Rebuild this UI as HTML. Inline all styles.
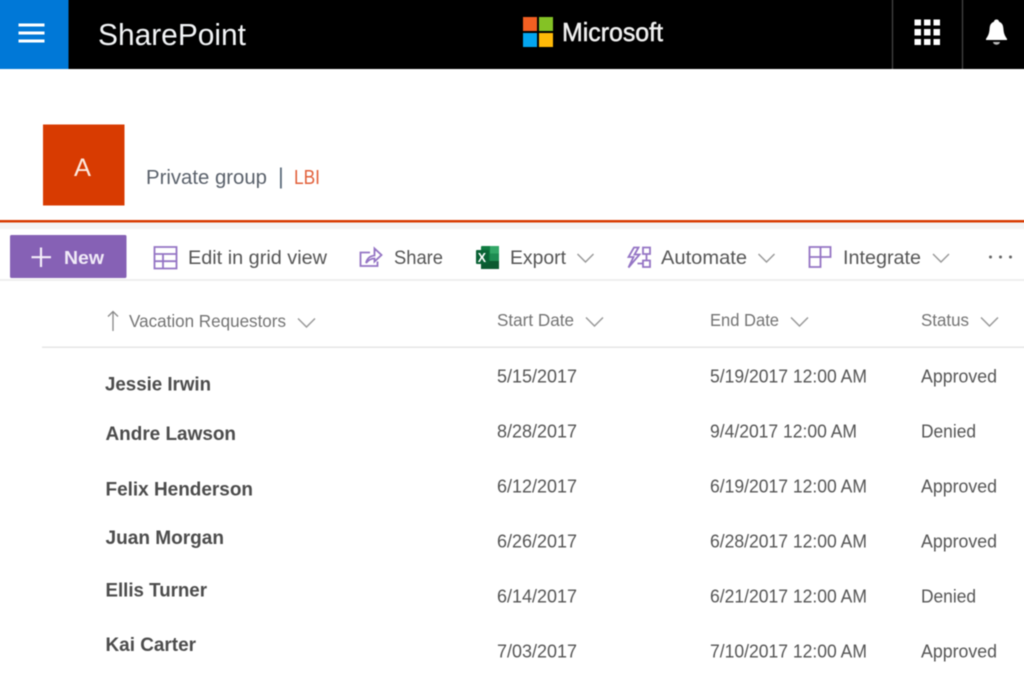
<!DOCTYPE html>
<html lang="en">
<head>
<meta charset="utf-8">
<title>SharePoint</title>
<style>
html,body{margin:0;padding:0;width:1024px;height:695px;overflow:hidden;background:#fff}
#w{position:relative;width:1024px;height:695px;overflow:hidden;contain:paint}
svg{display:block;position:absolute;left:-10px;top:-10px;filter:blur(.5px)}
text{font-family:"Liberation Sans",sans-serif}
.nm{font-size:19.5px;font-weight:700;fill:#4c4c4c}
.c{font-size:18px;fill:#555}
.h{font-size:17.5px;fill:#737373}
.t{font-size:19.5px;fill:#555}
.chev{fill:none;stroke:#969696;stroke-width:1.4}
.pu{fill:none;stroke:#9474c4;stroke-width:1.8}
</style>
</head>
<body>
<div id="w">
<svg width="1044" height="715" viewBox="-10 -10 1044 715" xmlns="http://www.w3.org/2000/svg">
<rect x="-10" y="-10" width="1044" height="715" fill="#fff"/>
<!-- top bar -->
<rect x="-10" y="-10" width="1044" height="79" fill="#000"/>
<rect x="-10" y="-10" width="78.500" height="79" fill="#0078d7"/>
<path d="M18.500 25H44.500M18.500 33H44.500M18.500 41H44.500" stroke="#fff" stroke-width="3"/>
<text x="98" y="45" font-size="31" fill="#f2f4f6" textLength="148" lengthAdjust="spacingAndGlyphs">SharePoint</text>
<rect x="523" y="17" width="14" height="14" fill="#f25f22"/>
<rect x="539" y="17" width="14" height="14" fill="#84c225"/>
<rect x="523" y="33" width="14" height="14" fill="#04a6f0"/>
<rect x="539" y="33" width="14" height="14" fill="#ffba08"/>
<text x="562" y="41" font-size="26" fill="#f0f0f0" stroke="#f0f0f0" stroke-width=".5" textLength="101" lengthAdjust="spacingAndGlyphs">Microsoft</text>
<path d="M892.500 -10V69M962.500 -10V69" stroke="#444" stroke-width="1.300"/>
<g fill="#fff">
<rect x="914.500" y="19.500" width="6.500" height="6"/><rect x="924" y="19.500" width="6.500" height="6"/><rect x="933.500" y="19.500" width="6.500" height="6"/>
<rect x="914.500" y="29" width="6.500" height="6.500"/><rect x="924" y="29" width="6.500" height="6.500"/><rect x="933.500" y="29" width="6.500" height="6.500"/>
<rect x="914.500" y="39" width="6.500" height="6"/><rect x="924" y="39" width="6.500" height="6"/><rect x="933.500" y="39" width="6.500" height="6"/>
<path d="M996.500 19.500c-1.500 0-2.400 1-2.600 2.200-3.200 1.200-4 3.600-4.300 6.800-.3 4.300-1 6.800-3.600 10.200v1.300h21v-1.300c-2.600-3.400-3.300-5.900-3.600-10.200-.3-3.200-1.100-5.600-4.300-6.800-.2-1.200-1.100-2.200-2.600-2.200z"/>
<path d="M993 42h7c-.3 1.700-1.700 2.700-3.500 2.700s-3.200-1-3.500-2.700z" fill="#bbb"/>
</g>
<!-- site header -->
<rect x="43" y="124.500" width="81.500" height="81" fill="#d83b01"/>
<text x="74" y="176" font-size="25" fill="#fde8de" textLength="17" lengthAdjust="spacingAndGlyphs">A</text>
<text x="146" y="184" font-size="20.500" fill="#5a616b" textLength="121" lengthAdjust="spacingAndGlyphs">Private group</text>
<rect x="280" y="167.500" width="1.800" height="21" fill="#5a6a7a"/>
<text x="294" y="184" font-size="20.500" fill="#e2603a" textLength="26" lengthAdjust="spacingAndGlyphs">LBI</text>
<rect x="-10" y="220" width="1044" height="2.500" fill="#d83b01"/>
<rect x="-10" y="222.500" width="1044" height="6.500" fill="#f4f4f4"/>
<!-- command bar -->
<rect x="-10" y="279" width="1044" height="2" fill="#efefef"/>
<rect x="10" y="235" width="116.500" height="43" rx="1.500" fill="#8661b5"/>
<path d="M41 247.500V267M31.500 257.200H51" stroke="#f4eefa" stroke-width="2.200"/>
<text x="64" y="264" font-size="18.500" font-weight="700" fill="#f0eaf7" textLength="40" lengthAdjust="spacingAndGlyphs">New</text>
<path class="pu" d="M154.500 247h22v21.500h-22zM154.500 254h22M154.500 261.200h22M163 254v14.500"/>
<text class="t" x="188" y="264" textLength="139" lengthAdjust="spacingAndGlyphs">Edit in grid view</text>
<path class="pu" stroke-width="1.400" d="M370 252.500h-9.500V266h17v-4.500M366 263c1-4.500 4-7 8.500-7.500V248.500l7 6.500-7 6.500V258.500c-3.500 0-6 1.500-8.500 4.500z"/>
<text class="t" x="394" y="264" textLength="49" lengthAdjust="spacingAndGlyphs">Share</text>
<!-- excel -->
<rect x="481" y="246" width="18" height="23" rx="1" fill="#107c41"/>
<rect x="490" y="246" width="9" height="7.500" fill="#33a767"/>
<rect x="490" y="253.500" width="9" height="7.500" fill="#1e8c52"/>
<rect x="481" y="261" width="18" height="8" fill="#0b5a30"/>
<rect x="476" y="250" width="13" height="14" rx="1" fill="#0a6235"/>
<text x="477.800" y="262" font-size="12.500" font-weight="700" fill="#fff">X</text>
<text class="t" x="510" y="264" textLength="56" lengthAdjust="spacingAndGlyphs">Export</text>
<path class="chev" d="M577.500 254l8 8 8-8"/>
<path class="pu" stroke-width="1.500" d="M634 247.500l-5.500 9.500h5l-5 10.500 11-13h-5l4-7zM643 247.500h7v6.500h-7zM643 260.500h7v6.500h-7zM646.500 254v6.500M642.500 263.500h-5"/>
<text class="t" x="661" y="264" textLength="86" lengthAdjust="spacingAndGlyphs">Automate</text>
<path class="chev" d="M758.500 254l8 8 8-8"/>
<path class="pu" d="M809.500 247h21v10h-21zM809.500 247v20h11V247"/>
<text class="t" x="843" y="264" textLength="78" lengthAdjust="spacingAndGlyphs">Integrate</text>
<path class="chev" d="M933 254l8 8 8-8"/>
<g fill="#666"><circle cx="990.500" cy="257" r="1.500"/><circle cx="1000.500" cy="257" r="1.500"/><circle cx="1010.500" cy="257" r="1.500"/></g>
<!-- column headers -->
<path d="M113 331V311.500M108 316.500l5-5 5 5" fill="none" stroke="#888" stroke-width="1.300"/>
<text class="h" x="129" y="327" textLength="157" lengthAdjust="spacingAndGlyphs">Vacation Requestors</text>
<path class="chev" d="M298 318.500l8.500 8.500 8.500-8.500"/>
<text class="h" x="497" y="326" textLength="77" lengthAdjust="spacingAndGlyphs">Start Date</text>
<path class="chev" d="M586 317.500l8.500 8.500 8.500-8.500"/>
<text class="h" x="710" y="326" textLength="69" lengthAdjust="spacingAndGlyphs">End Date</text>
<path class="chev" d="M791 317.500l8.500 8.500 8.500-8.500"/>
<text class="h" x="921" y="326" textLength="48" lengthAdjust="spacingAndGlyphs">Status</text>
<path class="chev" d="M981 317.500l8.500 8.500 8.500-8.500"/>
<rect x="42" y="346.500" width="992" height="1.500" fill="#e6e6e6"/>
<!-- rows -->
<text class="nm" x="105" y="390.500" textLength="106" lengthAdjust="spacingAndGlyphs">Jessie Irwin</text>
<text class="c" x="497" y="382.500" textLength="80" lengthAdjust="spacingAndGlyphs">5/15/2017</text>
<text class="c" x="710" y="382.500" textLength="157" lengthAdjust="spacingAndGlyphs">5/19/2017 12:00 AM</text>
<text class="c" x="921" y="382.500" textLength="76" lengthAdjust="spacingAndGlyphs">Approved</text>

<text class="nm" x="105.500" y="440" textLength="130.500" lengthAdjust="spacingAndGlyphs">Andre Lawson</text>
<text class="c" x="497" y="437.500" textLength="80" lengthAdjust="spacingAndGlyphs">8/28/2017</text>
<text class="c" x="710" y="437.500" textLength="147" lengthAdjust="spacingAndGlyphs">9/4/2017 12:00 AM</text>
<text class="c" x="921" y="437.500" textLength="55" lengthAdjust="spacingAndGlyphs">Denied</text>

<text class="nm" x="105.500" y="495.500" textLength="147.500" lengthAdjust="spacingAndGlyphs">Felix Henderson</text>
<text class="c" x="497" y="492.500" textLength="80" lengthAdjust="spacingAndGlyphs">6/12/2017</text>
<text class="c" x="710" y="492.500" textLength="157" lengthAdjust="spacingAndGlyphs">6/19/2017 12:00 AM</text>
<text class="c" x="921" y="492.500" textLength="76" lengthAdjust="spacingAndGlyphs">Approved</text>

<text class="nm" x="105.500" y="544" textLength="118.500" lengthAdjust="spacingAndGlyphs">Juan Morgan</text>
<text class="c" x="497" y="547.500" textLength="80" lengthAdjust="spacingAndGlyphs">6/26/2017</text>
<text class="c" x="710" y="547.500" textLength="157" lengthAdjust="spacingAndGlyphs">6/28/2017 12:00 AM</text>
<text class="c" x="921" y="547.500" textLength="76" lengthAdjust="spacingAndGlyphs">Approved</text>

<text class="nm" x="105.500" y="596.500" textLength="101.500" lengthAdjust="spacingAndGlyphs">Ellis Turner</text>
<text class="c" x="497" y="602.500" textLength="80" lengthAdjust="spacingAndGlyphs">6/14/2017</text>
<text class="c" x="710" y="602.500" textLength="157" lengthAdjust="spacingAndGlyphs">6/21/2017 12:00 AM</text>
<text class="c" x="921" y="602.500" textLength="55" lengthAdjust="spacingAndGlyphs">Denied</text>

<text class="nm" x="105.500" y="651" textLength="90.500" lengthAdjust="spacingAndGlyphs">Kai Carter</text>
<text class="c" x="497" y="657.500" textLength="80" lengthAdjust="spacingAndGlyphs">7/03/2017</text>
<text class="c" x="710" y="657.500" textLength="157" lengthAdjust="spacingAndGlyphs">7/10/2017 12:00 AM</text>
<text class="c" x="921" y="657.500" textLength="76" lengthAdjust="spacingAndGlyphs">Approved</text>
</svg>
</div>
</body>
</html>
